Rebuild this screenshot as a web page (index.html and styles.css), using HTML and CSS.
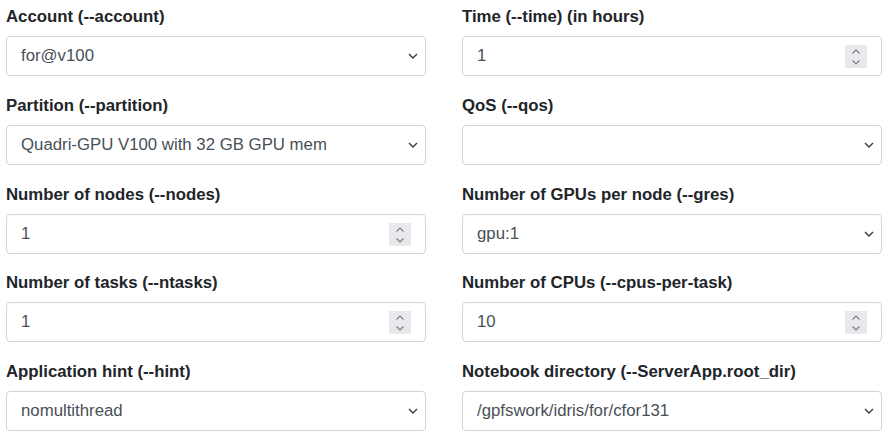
FILE: index.html
```html
<!DOCTYPE html>
<html lang="en">
<head>
<meta charset="utf-8">
<title>Job options</title>
<link rel="stylesheet" href="styles.css">
</head>
<body>
<form class="form-grid">
  <div class="field">
    <label class="lbl">Account (--account)</label>
    <select class="ctl sel"><option>for@v100</option></select>
  </div>
  <div class="field">
    <label class="lbl">Time (--time) (in hours)</label>
    <div class="num-wrap">
      <input class="ctl num" type="number" value="1">
      <span class="spin"><svg width="22" height="22" viewBox="0 0 22 22"><path d="M7.5 8.5 L11 5 L14.5 8.5 M7.5 15.5 L11 19 L14.5 15.5" fill="none" stroke="#7a7a85" stroke-width="1.2"/></svg></span>
    </div>
  </div>
  <div class="field">
    <label class="lbl">Partition (--partition)</label>
    <select class="ctl sel"><option>Quadri-GPU V100 with 32 GB GPU mem</option></select>
  </div>
  <div class="field">
    <label class="lbl">QoS (--qos)</label>
    <select class="ctl sel"><option></option></select>
  </div>
  <div class="field">
    <label class="lbl">Number of nodes (--nodes)</label>
    <div class="num-wrap">
      <input class="ctl num" type="number" value="1">
      <span class="spin"><svg width="22" height="22" viewBox="0 0 22 22"><path d="M7.5 8.5 L11 5 L14.5 8.5 M7.5 15.5 L11 19 L14.5 15.5" fill="none" stroke="#7a7a85" stroke-width="1.2"/></svg></span>
    </div>
  </div>
  <div class="field">
    <label class="lbl">Number of GPUs per node (--gres)</label>
    <select class="ctl sel"><option>gpu:1</option></select>
  </div>
  <div class="field">
    <label class="lbl">Number of tasks (--ntasks)</label>
    <div class="num-wrap">
      <input class="ctl num" type="number" value="1">
      <span class="spin"><svg width="22" height="22" viewBox="0 0 22 22"><path d="M7.5 8.5 L11 5 L14.5 8.5 M7.5 15.5 L11 19 L14.5 15.5" fill="none" stroke="#7a7a85" stroke-width="1.2"/></svg></span>
    </div>
  </div>
  <div class="field">
    <label class="lbl">Number of CPUs (--cpus-per-task)</label>
    <div class="num-wrap">
      <input class="ctl num" type="number" value="10">
      <span class="spin"><svg width="22" height="22" viewBox="0 0 22 22"><path d="M7.5 8.5 L11 5 L14.5 8.5 M7.5 15.5 L11 19 L14.5 15.5" fill="none" stroke="#7a7a85" stroke-width="1.2"/></svg></span>
    </div>
  </div>
  <div class="field">
    <label class="lbl">Application hint (--hint)</label>
    <select class="ctl sel"><option>nomultithread</option></select>
  </div>
  <div class="field">
    <label class="lbl">Notebook directory (--ServerApp.root_dir)</label>
    <select class="ctl sel"><option>/gpfswork/idris/for/cfor131</option></select>
  </div>
</form>
</body>
</html>
```
FILE: styles.css
```css
html, body {
  margin: 0;
  padding: 0;
  background: #ffffff;
}
body {
  padding: 5px 6px 0 6px;
  font-family: "Liberation Sans", Arial, sans-serif;
  color: #212529;
}
.form-grid {
  display: grid;
  grid-template-columns: 420px 420px;
  column-gap: 36px;
  margin: 0;
}
.field {
  display: flex;
  flex-direction: column;
  margin-bottom: 17.75px;
}
.lbl {
  display: block;
  font-size: 16.8px;
  font-weight: bold;
  line-height: 24px;
  margin-bottom: 7px;
  color: #212529;
}
.ctl {
  box-sizing: border-box;
  width: 100%;
  height: 40px;
  margin: 0;
  border: 1px solid #ced4da;
  border-radius: 4px;
  background-color: #ffffff;
  font-family: "Liberation Sans", Arial, sans-serif;
  font-size: 16.8px;
  line-height: 24px;
  color: #495057;
  padding: 6px 40px 6px 14px;
  outline: none;
}
.sel {
  -webkit-appearance: none;
  appearance: none;
  background-image: url("data:image/svg+xml,%3Csvg xmlns='http://www.w3.org/2000/svg' width='10' height='6' viewBox='0 0 10 6'%3E%3Cpath d='M1 1 L5 5 L9 1' fill='none' stroke='%23343a40' stroke-width='1.4'/%3E%3C/svg%3E");
  background-repeat: no-repeat;
  background-position: right 7px center;
  background-size: 10px 6px;
}
.num-wrap {
  position: relative;
}
.num {
  -moz-appearance: textfield;
}
.num::-webkit-inner-spin-button,
.num::-webkit-outer-spin-button {
  -webkit-appearance: none;
  margin: 0;
}
.spin {
  position: absolute;
  right: 15px;
  top: 9px;
  width: 22px;
  height: 23px;
  background: #e9e9ed;
  display: block;
}
.spin svg {
  display: block;
}
```
